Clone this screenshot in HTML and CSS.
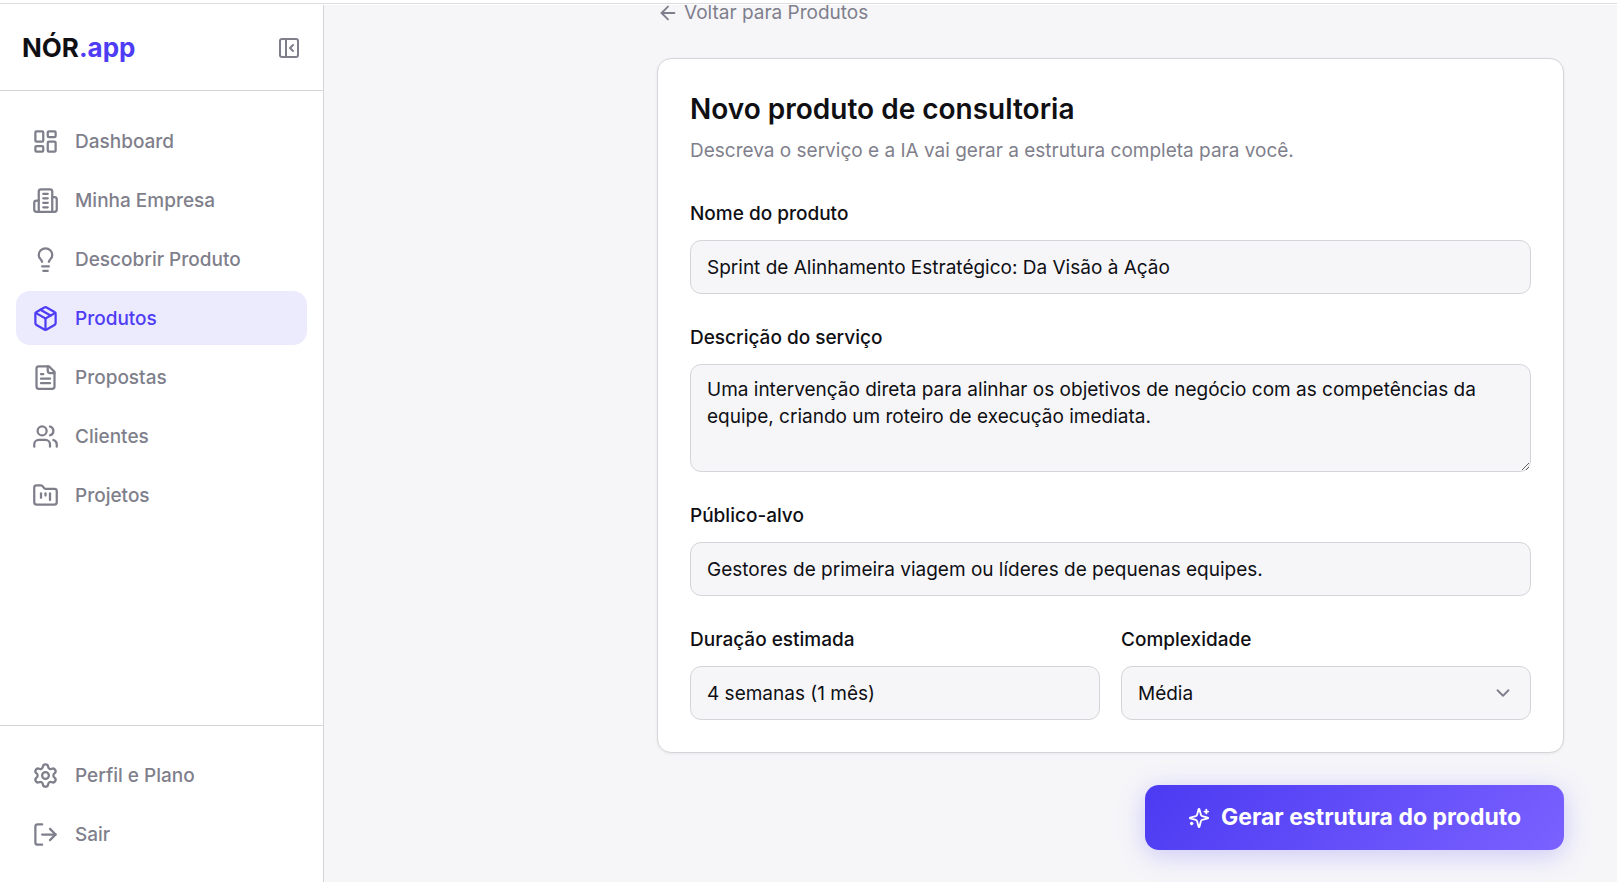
FILE: index.html
```html
<!DOCTYPE html>
<html lang="pt-BR">
<head>
    <meta charset="UTF-8">
    <meta name="viewport" content="width=device-width, initial-scale=1.0">
    <title>NÓR.app - Novo produto</title>
    <link rel="stylesheet" href="styles.css">
</head>
<body>

<div class="layout">
    <aside class="sidebar">
        <div class="sidebar-header">
            <a href="#" class="logo">NÓR<span>.app</span></a>
            <button type="button" class="collapse" aria-label="Recolher menu">
                <svg class="icon" viewBox="0 0 24 24"><rect x="3" y="3" width="18" height="18" rx="2"/><path d="M9 3v18"/><path d="m16 15-3-3 3-3"/></svg>
            </button>
        </div>

        <nav class="nav">
            <a href="#" class="nav-item">
                <svg class="icon" viewBox="0 0 24 24"><rect x="3" y="3" width="7" height="9" rx="1"/><rect x="14" y="3" width="7" height="5" rx="1"/><rect x="14" y="12" width="7" height="9" rx="1"/><rect x="3" y="16" width="7" height="5" rx="1"/></svg>
                Dashboard
            </a>
            <a href="#" class="nav-item">
                <svg class="icon" viewBox="0 0 24 24"><path d="M6 22V4a2 2 0 0 1 2-2h8a2 2 0 0 1 2 2v18Z"/><path d="M6 12H4a2 2 0 0 0-2 2v6a2 2 0 0 0 2 2h2"/><path d="M18 9h2a2 2 0 0 1 2 2v9a2 2 0 0 1-2 2h-2"/><path d="M10 6h4"/><path d="M10 10h4"/><path d="M10 14h4"/><path d="M10 18h4"/></svg>
                Minha Empresa
            </a>
            <a href="#" class="nav-item">
                <svg class="icon" viewBox="0 0 24 24"><path d="M15 14c.2-1 .7-1.7 1.5-2.5 1-.9 1.5-2.2 1.5-3.5A6 6 0 0 0 6 8c0 1 .2 2.2 1.5 3.5.7.7 1.3 1.5 1.5 2.5"/><path d="M9 18h6"/><path d="M10 22h4"/></svg>
                Descobrir Produto
            </a>
            <a href="#" class="nav-item active">
                <svg class="icon" viewBox="0 0 24 24"><path d="M11 21.73a2 2 0 0 0 2 0l7-4A2 2 0 0 0 21 16V8a2 2 0 0 0-1-1.73l-7-4a2 2 0 0 0-2 0l-7 4A2 2 0 0 0 3 8v8a2 2 0 0 0 1 1.73z"/><path d="M12 22V12"/><path d="m3.3 7 8.7 5 8.7-5"/><path d="m7.5 4.27 9 5.15"/></svg>
                Produtos
            </a>
            <a href="#" class="nav-item">
                <svg class="icon" viewBox="0 0 24 24"><path d="M15 2H6a2 2 0 0 0-2 2v16a2 2 0 0 0 2 2h12a2 2 0 0 0 2-2V7Z"/><path d="M14 2v4a2 2 0 0 0 2 2h4"/><path d="M10 9H8"/><path d="M16 13H8"/><path d="M16 17H8"/></svg>
                Propostas
            </a>
            <a href="#" class="nav-item">
                <svg class="icon" viewBox="0 0 24 24"><path d="M16 21v-2a4 4 0 0 0-4-4H6a4 4 0 0 0-4 4v2"/><circle cx="9" cy="7" r="4"/><path d="M22 21v-2a4 4 0 0 0-3-3.87"/><path d="M16 3.13a4 4 0 0 1 0 7.75"/></svg>
                Clientes
            </a>
            <a href="#" class="nav-item">
                <svg class="icon" viewBox="0 0 24 24"><path d="M4 20h16a2 2 0 0 0 2-2V8a2 2 0 0 0-2-2h-7.93a2 2 0 0 1-1.66-.9l-.82-1.2A2 2 0 0 0 7.93 3H4a2 2 0 0 0-2 2v13c0 1.1.9 2 2 2Z"/><path d="M8 10v4"/><path d="M12 10v2"/><path d="M16 10v6"/></svg>
                Projetos
            </a>
        </nav>

        <div class="sidebar-footer">
            <a href="#" class="nav-item">
                <svg class="icon" viewBox="0 0 24 24"><path d="M9.671 4.136a2.34 2.34 0 0 1 4.659 0 2.34 2.34 0 0 0 3.319 1.915 2.34 2.34 0 0 1 2.33 4.033 2.34 2.34 0 0 0 0 3.831 2.34 2.34 0 0 1-2.33 4.033 2.34 2.34 0 0 0-3.319 1.915 2.34 2.34 0 0 1-4.659 0 2.34 2.34 0 0 0-3.32-1.915 2.34 2.34 0 0 1-2.33-4.033 2.34 2.34 0 0 0 0-3.831A2.34 2.34 0 0 1 6.35 6.051a2.34 2.34 0 0 0 3.319-1.915"/><circle cx="12" cy="12" r="3"/></svg>
                Perfil e Plano
            </a>
            <button type="button" class="nav-item">
                <svg class="icon" viewBox="0 0 24 24"><path d="M9 21H5a2 2 0 0 1-2-2V5a2 2 0 0 1 2-2h4"/><path d="m16 17 5-5-5-5"/><path d="M21 12H9"/></svg>
                Sair
            </button>
        </div>
    </aside>

    <main class="main">
        <form class="content">
            <a href="#" class="back">
                <svg class="icon" viewBox="0 0 24 24"><path d="m12 19-7-7 7-7"/><path d="M19 12H5"/></svg>
                Voltar para Produtos
            </a>

            <section class="card">
                <h1>Novo produto de consultoria</h1>
                <p class="subtitle">Descreva o serviço e a IA vai gerar a estrutura completa para você.</p>

                <div class="fields">
                    <div class="field">
                        <label for="nome">Nome do produto</label>
                        <input type="text" id="nome" value="Sprint de Alinhamento Estratégico: Da Visão à Ação">
                    </div>
                    <div class="field">
                        <label for="descricao">Descrição do serviço</label>
                        <textarea id="descricao" rows="3">Uma intervenção direta para alinhar os objetivos de negócio com as competências da equipe, criando um roteiro de execução imediata.</textarea>
                    </div>
                    <div class="field">
                        <label for="publico">Público-alvo</label>
                        <input type="text" id="publico" value="Gestores de primeira viagem ou líderes de pequenas equipes.">
                    </div>
                    <div class="row">
                        <div class="field">
                            <label for="duracao">Duração estimada</label>
                            <input type="text" id="duracao" value="4 semanas (1 mês)">
                        </div>
                        <div class="field">
                            <label for="complexidade">Complexidade</label>
                            <div class="select">
                                <select id="complexidade">
                                    <option>Baixa</option>
                                    <option selected>Média</option>
                                    <option>Alta</option>
                                </select>
                                <svg class="icon" viewBox="0 0 24 24"><path d="m6 9 6 6 6-6"/></svg>
                            </div>
                        </div>
                    </div>
                </div>
            </section>

            <button type="submit" class="button">
                <svg class="icon" viewBox="0 0 24 24"><path d="M9.937 15.5A2 2 0 0 0 8.5 14.063l-6.135-1.582a.5.5 0 0 1 0-.962L8.5 9.936A2 2 0 0 0 9.937 8.5l1.582-6.135a.5.5 0 0 1 .963 0L14.063 8.5A2 2 0 0 0 15.5 9.937l6.135 1.581a.5.5 0 0 1 0 .964L15.5 14.063a2 2 0 0 0-1.437 1.437l-1.582 6.135a.5.5 0 0 1-.963 0z"/><path d="M20 3v4"/><path d="M22 5h-4"/><path d="M4 17v2"/><path d="M5 18H3"/></svg>
                Gerar estrutura do produto
            </button>
        </form>
    </main>
</div>

</body>
</html>
```
FILE: styles.css
```css
* {
    box-sizing: border-box;
}
body {
    display: flex;
    flex-direction: column;
    min-height: 100vh;
    margin: 0;
    padding-top: 3px;
    font-family: 'Inter', sans-serif;
    font-size: 19px;
    line-height: 27px;
    color: #0f0f14;
    background-color: white;
}
a {
    color: inherit;
    text-decoration: none;
}
button, input, textarea, select {
    font: inherit;
    color: inherit;
}
.icon {
    flex: none;
    width: 22px;
    height: 22px;
    fill: none;
    stroke: currentColor;
    stroke-width: 2;
    stroke-linecap: round;
    stroke-linejoin: round;
}
.layout {
    display: flex;
    flex: 1;
    padding-top: 1px;
    border-top: 1px solid #dedee0;
}

/* Sidebar */
.sidebar {
    display: flex;
    flex-direction: column;
    flex: none;
    width: 324px;
    background-color: white;
    border-right: 1px solid #d4d5d8;
}
.sidebar-header {
    display: flex;
    align-items: center;
    justify-content: space-between;
    height: 86px;
    padding: 0 22px;
    border-bottom: 1px solid #d4d5d8;
}
.logo {
    font-size: 26px;
    font-weight: 700;
}
.logo span {
    color: #4f3df5;
}
.collapse {
    display: flex;
    padding: 0;
    border: none;
    background: none;
    color: #7f7f8c;
    cursor: pointer;
}
.collapse .icon {
    width: 24px;
    height: 24px;
}
.nav {
    display: flex;
    flex-direction: column;
    flex: 1;
    gap: 5px;
    padding: 23px 16px;
}
.nav-item {
    display: flex;
    align-items: center;
    gap: 16px;
    height: 54px;
    padding: 0 16px;
    border: none;
    border-radius: 14px;
    background: none;
    color: #7f7f8c;
    font-weight: 500;
    cursor: pointer;
}
.nav-item .icon {
    width: 27px;
    height: 27px;
}
.nav-item.active {
    background-color: #eceafd;
    color: #4f3df5;
}
.sidebar-footer {
    display: flex;
    flex-direction: column;
    gap: 5px;
    padding: 22px 16px 21px;
    border-top: 1px solid #d4d5d8;
}

/* Main content */
.main {
    flex: 1;
    padding: 0 53px 24px;
    background-color: #f6f6f9;
}
.content {
    display: flex;
    flex-direction: column;
    max-width: 907px;
    margin-left: auto;
}
.back {
    display: flex;
    align-items: center;
    align-self: flex-start;
    gap: 5px;
    height: 15px;
    color: #7f7f8c;
}
.card {
    margin: 38px 0 32px;
    padding: 32px;
    background-color: white;
    border: 1px solid #d4d5d8;
    border-radius: 14px;
    box-shadow: 0 1px 3px rgba(0, 0, 0, 0.06);
}
h1 {
    margin: 0 0 10px;
    font-size: 28px;
    line-height: 36px;
    font-weight: 600;
}
.subtitle {
    margin: 0 0 36px;
    color: #7f7f8c;
}
.fields {
    display: flex;
    flex-direction: column;
    gap: 30px;
}
.field {
    display: flex;
    flex-direction: column;
    gap: 13px;
}
.row {
    display: grid;
    grid-template-columns: 1fr 1fr;
    gap: 21px;
}
label {
    font-weight: 500;
}
input, textarea, select {
    width: 100%;
    height: 54px;
    padding: 0 16px;
    background-color: #f6f6f9;
    border: 1px solid #d4d5d8;
    border-radius: 11px;
    outline: none;
}
input:focus, textarea:focus, select:focus {
    border-color: #4f3df5;
}
textarea {
    display: block;
    height: auto;
    padding: 11px 16px 14px;
    resize: vertical;
}
.select {
    position: relative;
}
select {
    display: block;
    appearance: none;
}
.select .icon {
    position: absolute;
    top: 16px;
    right: 17px;
    color: #7f7f8c;
    pointer-events: none;
}
.button {
    display: flex;
    align-items: center;
    align-self: flex-end;
    gap: 11px;
    height: 65px;
    padding: 0 43px;
    border: none;
    border-radius: 14px;
    background: linear-gradient(135deg, #4b3af2, #7a61ff);
    box-shadow: 0 5px 27px rgba(79, 61, 245, 0.25);
    color: white;
    font-size: 23px;
    font-weight: 700;
    cursor: pointer;
}
```
